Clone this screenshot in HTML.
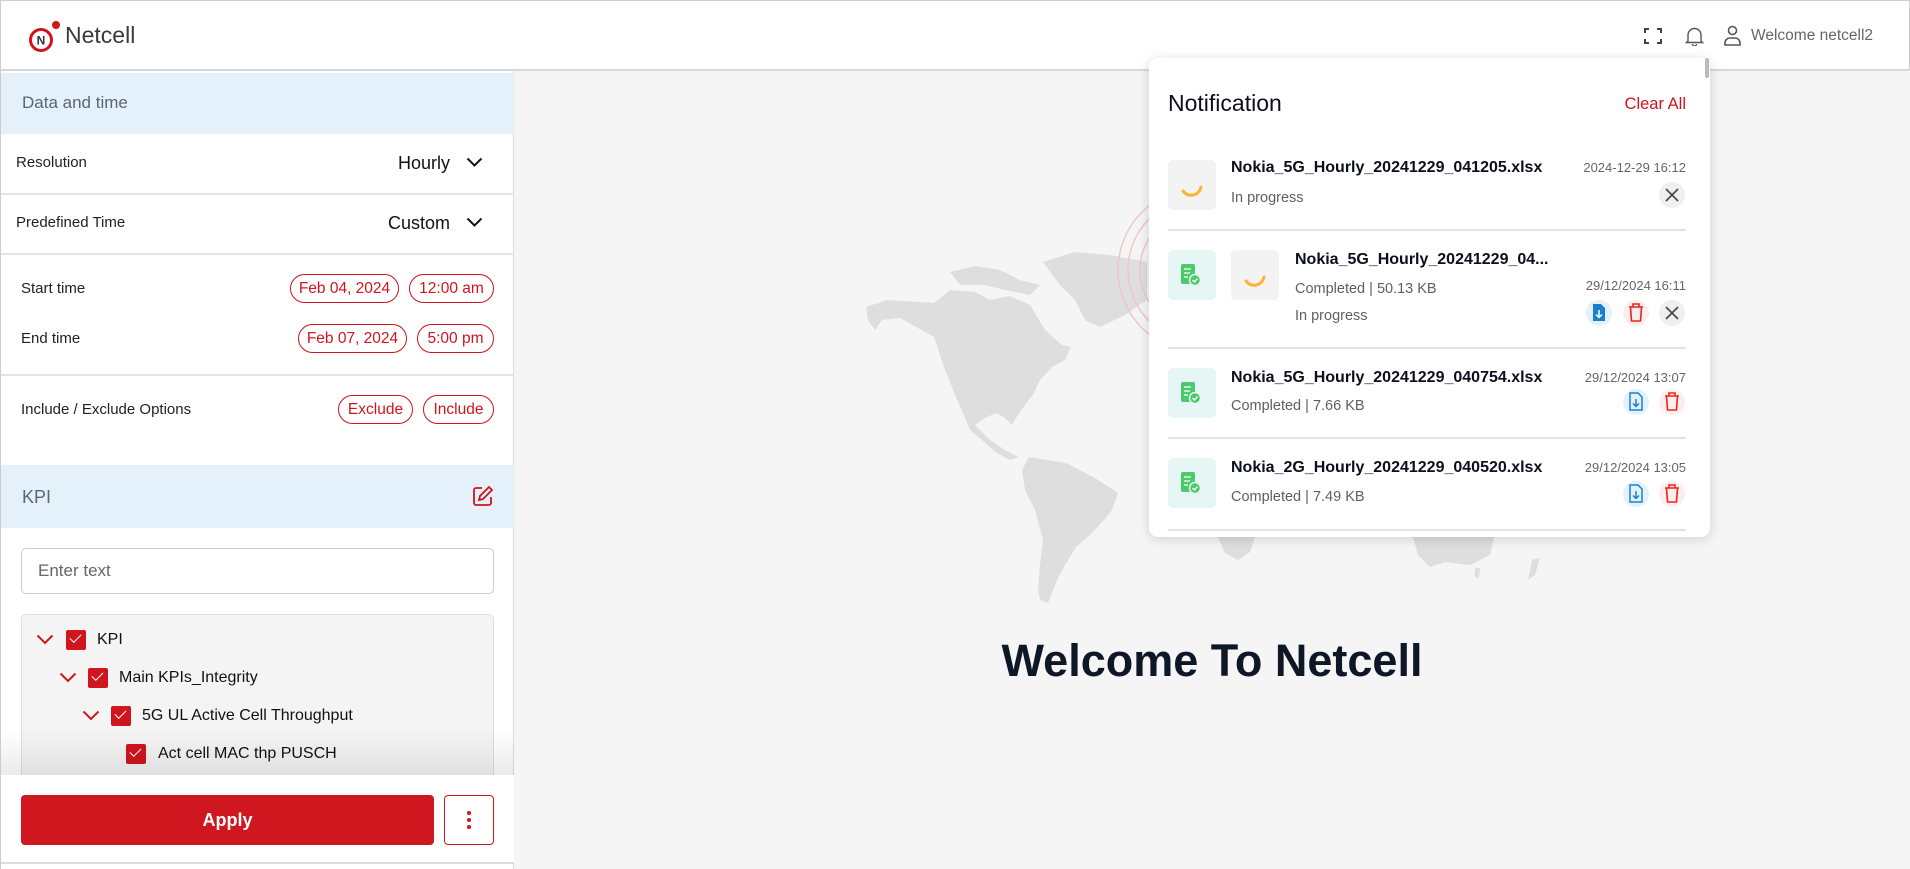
<!DOCTYPE html>
<html><head><meta charset="utf-8"><style>
*{box-sizing:border-box;margin:0;padding:0}
body{width:1910px;height:869px;overflow:hidden;background:#f5f5f5;font-family:"Liberation Sans",sans-serif;position:relative;color:#222}
.a{position:absolute}
.hdr{left:0;top:0;width:1910px;height:71px;background:#fff;border:1px solid #cfcfcf;border-bottom:2px solid #d8d8d8}
.side{left:0;top:71px;width:514px;height:798px;background:#fff;border-right:1px solid #ddd;border-left:1px solid #ccc}
.band{left:1px;width:513px;background:#e5f1fa}
.div{left:1px;width:513px;height:2px;background:#e3e3e3}
.pill{height:29px;border:1.5px solid #d0151e;border-radius:15px;color:#d0151e;font-size:15.5px;display:flex;align-items:center;justify-content:center;white-space:nowrap}
.lbl{font-size:15px;color:#222}
.cb{width:20px;height:20px;background:#d0151e;border-radius:2px}
.cb::after{content:"";position:absolute;left:4px;top:4px;width:10px;height:5px;border-left:1.6px solid #fff;border-bottom:1.6px solid #fff;transform:rotate(-45deg)}
.tt{font-size:16px;color:#111}
.np{left:1149px;top:58px;width:561px;height:479px;background:#fff;border-radius:9px;box-shadow:0 2px 12px rgba(0,0,0,.15)}
.box{width:48px;height:50px;border-radius:5px}
.g{background:#e5f6f4}.s{background:#f3f3f3}
.nm{font-size:16px;font-weight:bold;color:#0b0f1c;white-space:nowrap}
.sub{font-size:14.5px;color:#5f5f5f;white-space:nowrap}
.dt{font-size:13px;color:#666;text-align:right;width:200px}
.hr{left:1168px;width:518px;height:1.5px;background:#e2e2e2}
</style></head><body>

<svg class="a" style="left:514px;top:71px" width="1396" height="798" viewBox="514 71 1396 798">
<g fill="#dedede">
<path d="M866,307 L887,300 L934,303 L950,290 L975,292 L990,300 L1010,296 L1030,305 L1045,330 L1062,345 L1071,347 L1065,360 L1052,367 L1040,380 L1034,393 L1019,413 L1012,425 L1005,418 L996,413 L985,418 L975,425 L990,440 L1005,450 L1019,457 L1010,460 L995,452 L982,440 L970,430 L963,413 L955,395 L944,367 L934,337 L900,318 L882,320 L875,330 L868,320 Z"/>
<path d="M1043,262 L1075,252 L1110,255 L1147,262 L1147,300 L1125,315 L1100,327 L1085,320 L1075,300 L1060,285 Z"/>
<path d="M950,272 L975,266 L1000,270 L1020,280 L1040,285 L1030,295 L1005,290 L985,285 L960,285 Z"/>
<path d="M1029,457 L1066,463 L1095,478 L1118,493 L1112,510 L1104,520 L1090,535 L1076,547 L1065,565 L1057,580 L1048,603 L1040,600 L1038,590 L1040,565 L1043,540 L1035,510 L1025,490 L1022,470 Z"/>
<path d="M1218,537 L1255,537 L1250,552 L1238,560 L1225,553 Z"/>
<path d="M1413,537 L1494,537 L1490,555 L1470,565 L1445,562 L1430,567 L1418,555 Z"/>
<path d="M1475,568 L1480,568 L1479,578 L1475,577 Z"/>
<path d="M1532,560 L1540,558 L1535,575 L1528,580 Z"/>
</g>
<g fill="none" stroke="#f2c6c6" stroke-width="1.5">
<circle cx="1200" cy="270" r="82"/><circle cx="1200" cy="270" r="72"/><circle cx="1200" cy="270" r="60"/>
</g>
</svg>
<div class="a" style="left:514px;top:632px;width:1396px;text-align:center;font-size:45px;font-weight:bold;color:#0e1726;line-height:58px">Welcome To Netcell</div>

<div class="a hdr"></div>
<svg class="a" style="left:27px;top:20px" width="36" height="34" viewBox="0 0 36 34">
<circle cx="14" cy="20" r="10.5" fill="none" stroke="#d0151e" stroke-width="3"/>
<text x="14" y="24.5" font-family="Liberation Sans" font-size="12" font-weight="bold" fill="#333" text-anchor="middle">N</text>
<circle cx="29" cy="5" r="4" fill="#d0151e"/>
</svg>
<div class="a" style="left:65px;top:22px;font-size:23px;color:#3a3a3a">Netcell</div>
<svg class="a" style="left:1644px;top:28px" width="18" height="16" viewBox="0 0 18 16" fill="none" stroke="#444" stroke-width="2"><path d="M1 5V1h4M13 1h4v4M17 11v4h-4M5 15H1v-4"/></svg>
<svg class="a" style="left:1685px;top:26px" width="19" height="20" viewBox="0 0 19 20" fill="none" stroke="#555" stroke-width="1.4"><path d="M3 15V9a6.5 6.5 0 0 1 13 0v6l1.5 1.5h-16z M7.5 18a2 2 0 0 0 4 0"/></svg>
<svg class="a" style="left:1723px;top:25px" width="19" height="21" viewBox="0 0 19 21" fill="none" stroke="#555" stroke-width="1.6"><circle cx="9.5" cy="5.5" r="4"/><path d="M2 20v-2a5 5 0 0 1 5-5h5a5 5 0 0 1 5 5v2z"/></svg>
<div class="a" style="left:1751px;top:27px;font-size:15.5px;color:#666">Welcome netcell2</div>

<div class="a side"></div>
<div class="a band" style="top:73px;height:61px"></div>
<div class="a" style="left:22px;top:93px;font-size:17px;color:#5b6573">Data and time</div>
<div class="a lbl" style="left:16px;top:154px">Resolution</div>
<div class="a" style="left:398px;top:153px;font-size:18px;color:#111">Hourly</div>
<svg class="a" style="left:466px;top:157px" width="17" height="11" viewBox="0 0 17 11"><path d="M1.5 1.5l7 7 7-7" fill="none" stroke="#111" stroke-width="2"/></svg>
<div class="a div" style="top:193px"></div>
<div class="a lbl" style="left:16px;top:214px">Predefined Time</div>
<div class="a" style="left:388px;top:213px;font-size:18px;color:#111">Custom</div>
<svg class="a" style="left:466px;top:217px" width="17" height="11" viewBox="0 0 17 11"><path d="M1.5 1.5l7 7 7-7" fill="none" stroke="#111" stroke-width="2"/></svg>
<div class="a div" style="top:253px"></div>
<div class="a lbl" style="left:21px;top:280px">Start time</div>
<div class="a pill" style="left:290px;top:274px;width:109px">Feb 04, 2024</div>
<div class="a pill" style="left:409px;top:274px;width:85px">12:00 am</div>
<div class="a lbl" style="left:21px;top:330px">End time</div>
<div class="a pill" style="left:298px;top:324px;width:109px">Feb 07, 2024</div>
<div class="a pill" style="left:417px;top:324px;width:77px">5:00 pm</div>
<div class="a div" style="top:374px"></div>
<div class="a lbl" style="left:21px;top:401px">Include / Exclude Options</div>
<div class="a pill" style="left:338px;top:395px;width:75px">Exclude</div>
<div class="a pill" style="left:423px;top:395px;width:71px">Include</div>
<div class="a band" style="top:465px;height:63px"></div>
<div class="a" style="left:22px;top:487px;font-size:18px;color:#5b6573">KPI</div>
<svg class="a" style="left:472px;top:485px" width="22" height="22" viewBox="0 0 22 22" fill="none" stroke="#d0151e" stroke-width="1.8"><path d="M10 3H4a2 2 0 0 0-2 2v13a2 2 0 0 0 2 2h13a2 2 0 0 0 2-2v-6"/><path d="M17 2l3 3-9 9-4 1 1-4z"/></svg>
<div class="a" style="left:21px;top:548px;width:473px;height:46px;border:1px solid #ccc;border-radius:5px"></div>
<div class="a" style="left:38px;top:561px;font-size:17px;color:#666">Enter text</div>
<div class="a" style="left:21px;top:614px;width:473px;height:170px;border:1px solid #ddd;border-radius:5px;background:#f4f4f4"></div>
<svg class="a" style="left:36px;top:634px" width="18" height="12"><path d="M1.5 1.5l7.5 7.5 7.5-7.5" fill="none" stroke="#d0151e" stroke-width="2"/></svg>
<div class="a cb" style="left:66px;top:630px"></div>
<div class="a tt" style="left:97px;top:631px">KPI</div>
<svg class="a" style="left:59px;top:672px" width="18" height="12"><path d="M1.5 1.5l7.5 7.5 7.5-7.5" fill="none" stroke="#d0151e" stroke-width="2"/></svg>
<div class="a cb" style="left:88px;top:668px"></div>
<div class="a tt" style="left:119px;top:669px">Main KPIs_Integrity</div>
<svg class="a" style="left:82px;top:710px" width="18" height="12"><path d="M1.5 1.5l7.5 7.5 7.5-7.5" fill="none" stroke="#d0151e" stroke-width="2"/></svg>
<div class="a cb" style="left:111px;top:706px"></div>
<div class="a tt" style="left:142px;top:707px">5G UL Active Cell Throughput</div>
<div class="a cb" style="left:126px;top:744px"></div>
<div class="a tt" style="left:158px;top:745px">Act cell MAC thp PUSCH</div>
<svg class="a" style="left:0;top:620px" width="514" height="160">
<defs><linearGradient id="gr" x1="0" y1="0" x2="0" y2="1"><stop offset="0" stop-color="#000" stop-opacity="0"/><stop offset="1" stop-color="#000" stop-opacity=".09"/></linearGradient></defs>
<rect x="1" y="110" width="513" height="50" fill="url(#gr)"/>
</svg>
<div class="a" style="left:1px;top:775px;width:513px;height:89px;background:#fff;border-bottom:2px solid #ddd"></div>
<div class="a" style="left:21px;top:795px;width:413px;height:50px;background:#d0161e;border-radius:4px;color:#fff;font-size:18px;font-weight:bold;text-align:center;line-height:50px">Apply</div>
<div class="a" style="left:444px;top:795px;width:50px;height:50px;border:1.5px solid #d0151e;border-radius:4px"></div>
<div class="a" style="left:467px;top:811px;width:4px;height:4px;border-radius:50%;background:#d0151e;box-shadow:0 7px 0 #d0151e,0 14px 0 #d0151e"></div>

<div class="a np"></div>
<div class="a" style="left:1705px;top:58px;width:4px;height:20px;background:#bbb;border-radius:2px"></div>
<div class="a" style="left:1168px;top:90px;font-size:23px;font-weight:500;color:#0b0f1c">Notification</div>
<div class="a" style="left:1584px;top:95px;width:102px;text-align:right;font-size:16.5px;color:#d0151e">Clear All</div>

<svg width="0" height="0" style="position:absolute">
<defs>
<g id="sp"><path d="M-9 -1 A10 10 0 0 0 9 -5" transform="translate(0,4)" fill="none" stroke="#fbb431" stroke-width="3" stroke-linecap="round"/></g>
<g id="fl"><rect x="-10" y="-12" width="14" height="20" rx="2" fill="#4cc96a"/><path d="M-7 -7h7M-7 -3h6M-7 1h4" stroke="#fff" stroke-width="1.3"/><circle cx="4" cy="4" r="5.5" fill="#4cc96a" stroke="#e5f6f4" stroke-width="1.5"/><path d="M1.5 4l2 2 3-3.5" fill="none" stroke="#fff" stroke-width="1.3"/></g>
<g id="x"><circle r="13" fill="#efefef"/><path d="M-6 -6L6 6M6 -6L-6 6" stroke="#444" stroke-width="1.6"/></g>
<g id="dl"><circle r="13" fill="#e3f1fb"/><path d="M-6 -9h8l4 4v13h-12z" fill="#1a7fd0"/><path d="M0 -3v7M-3 1.5l3 3 3-3" fill="none" stroke="#fff" stroke-width="1.5"/></g>
<g id="dlo"><circle r="13" fill="#e3f1fb"/><path d="M-6 -9h8l4 4v13h-12z" fill="none" stroke="#1a7fd0" stroke-width="1.5"/><path d="M0 -3v7M-3 1.5l3 3 3-3" fill="none" stroke="#1a7fd0" stroke-width="1.5"/></g>
<g id="tr"><circle r="13" fill="#fdeeee"/><path d="M-7 -6h14M-3 -6v-3h6v3M-5.5 -6l1 14h9l1 -14" fill="none" stroke="#e8251a" stroke-width="1.6"/></g>
</defs></svg>

<div class="a box s" style="left:1168px;top:160px"></div>
<svg class="a" style="left:1168px;top:160px" width="48" height="50"><use href="#sp" x="24" y="28"/></svg>
<div class="a nm" style="left:1231px;top:159px">Nokia_5G_Hourly_20241229_041205.xlsx</div>
<div class="a sub" style="left:1231px;top:190px">In progress</div>
<div class="a dt" style="left:1486px;top:160px">2024-12-29 16:12</div>
<svg class="a" style="left:1659px;top:182px" width="26" height="26"><use href="#x" x="13" y="13"/></svg>
<div class="a hr" style="top:229px"></div>
<div class="a box g" style="left:1168px;top:250px"></div>
<svg class="a" style="left:1168px;top:250px" width="48" height="50"><use href="#fl" x="23" y="26"/></svg>
<div class="a box s" style="left:1231px;top:250px"></div>
<svg class="a" style="left:1231px;top:250px" width="48" height="50"><use href="#sp" x="24" y="28"/></svg>
<div class="a nm" style="left:1295px;top:251px">Nokia_5G_Hourly_20241229_04...</div>
<div class="a sub" style="left:1295px;top:281px">Completed | 50.13 KB</div>
<div class="a sub" style="left:1295px;top:308px">In progress</div>
<div class="a dt" style="left:1486px;top:278px">29/12/2024 16:11</div>
<svg class="a" style="left:1586px;top:300px" width="100" height="26"><use href="#dl" x="13" y="13"/><use href="#tr" x="50" y="13"/><use href="#x" x="86" y="13"/></svg>
<div class="a hr" style="top:347px"></div>
<div class="a box g" style="left:1168px;top:368px"></div>
<svg class="a" style="left:1168px;top:368px" width="48" height="50"><use href="#fl" x="23" y="26"/></svg>
<div class="a nm" style="left:1231px;top:369px">Nokia_5G_Hourly_20241229_040754.xlsx</div>
<div class="a sub" style="left:1231px;top:398px">Completed | 7.66 KB</div>
<div class="a dt" style="left:1486px;top:370px">29/12/2024 13:07</div>
<svg class="a" style="left:1622px;top:389px" width="64" height="26"><use href="#dlo" x="14" y="13"/><use href="#tr" x="50" y="13"/></svg>
<div class="a hr" style="top:437px"></div>
<div class="a box g" style="left:1168px;top:458px"></div>
<svg class="a" style="left:1168px;top:458px" width="48" height="50"><use href="#fl" x="23" y="26"/></svg>
<div class="a nm" style="left:1231px;top:459px">Nokia_2G_Hourly_20241229_040520.xlsx</div>
<div class="a sub" style="left:1231px;top:489px">Completed | 7.49 KB</div>
<div class="a dt" style="left:1486px;top:460px">29/12/2024 13:05</div>
<svg class="a" style="left:1622px;top:481px" width="64" height="26"><use href="#dlo" x="14" y="13"/><use href="#tr" x="50" y="13"/></svg>
<div class="a hr" style="top:529px"></div>
</body></html>
